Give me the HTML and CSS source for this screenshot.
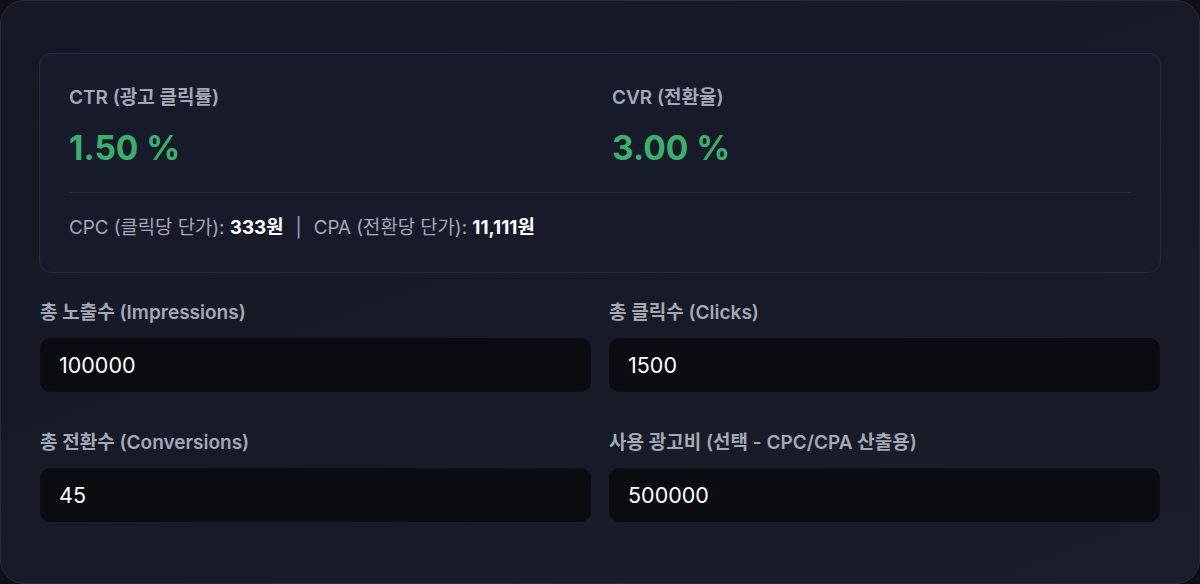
FILE: index.html
```html
<!DOCTYPE html>
<html lang="ko">

<head>
    <meta charset="UTF-8">
    <meta name="viewport" content="width=device-width, initial-scale=1.0">
    <title>광고 성과 계산기</title>
    <link rel="stylesheet" href="styles.css">
</head>

<body>

    <div class="card">
        <!-- 결과 요약 -->
        <div class="result-box">
            <div class="metrics">
                <div class="metric">
                    <div class="metric-label">CTR (광고 클릭률)</div>
                    <div class="metric-value" id="ctr">1.50 %</div>
                </div>
                <div class="metric">
                    <div class="metric-label">CVR (전환율)</div>
                    <div class="metric-value" id="cvr">3.00 %</div>
                </div>
            </div>
            <div class="divider"></div>
            <div class="cost-line">
                CPC (클릭당 단가): <b id="cpc">333원</b><span class="sep">|</span>CPA (전환당 단가): <b id="cpa">11,111원</b>
            </div>
        </div>

        <!-- 입력 폼 -->
        <div class="form-grid">
            <div class="field">
                <label for="impressions">총 노출수 (Impressions)</label>
                <input type="number" id="impressions" value="100000">
            </div>
            <div class="field">
                <label for="clicks">총 클릭수 (Clicks)</label>
                <input type="number" id="clicks" value="1500">
            </div>
            <div class="field">
                <label for="conversions">총 전환수 (Conversions)</label>
                <input type="number" id="conversions" value="45">
            </div>
            <div class="field">
                <label for="cost">사용 광고비 (선택 - CPC/CPA 산출용)</label>
                <input type="number" id="cost" value="500000">
            </div>
        </div>
    </div>

</body>

</html>
```

FILE: styles.css
```css
* {
    box-sizing: border-box;
}

body {
    margin: 0;
    background: #0e1017;
    font-family: 'Inter', 'Noto Sans CJK KR', sans-serif;
    color: #e5e7eb;
}

/* 카드 */
.card {
    height: 584px;
    padding: 52px 38px 0;
    background: linear-gradient(160deg, #151925 0%, #171b28 60%, #191e2a 100%);
    border: 1px solid #262b37;
    border-radius: 24px;
}

/* 결과 요약 */
.result-box {
    padding: 32px 29px 32px;
    background: #171b29;
    border: 1px solid #262b38;
    border-radius: 12px;
}

.metrics {
    display: grid;
    grid-template-columns: 1fr 1fr;
    gap: 24px;
}

.metric-label {
    font-size: 19px;
    font-weight: 600;
    line-height: 24px;
    color: #a3a8b4;
}

.metric-value {
    margin-top: 18px;
    font-size: 33.5px;
    font-weight: 700;
    line-height: 40px;
    color: #38b06c;
}

.divider {
    height: 1px;
    margin: 24px 0 23px;
    background: #262b38;
}

.cost-line {
    font-size: 18.8px;
    line-height: 24px;
    color: #a3a8b4;
}

.cost-line b {
    color: #ffffff;
    font-weight: 700;
}

.sep {
    margin: 0 12px;
}

/* 입력 폼 */
.form-grid {
    display: grid;
    grid-template-columns: 1fr 1fr;
    column-gap: 18px;
    row-gap: 39px;
    margin-top: 28px;
    padding: 0 1px;
}

.field label {
    display: block;
    margin-bottom: 13px;
    font-size: 19px;
    font-weight: 600;
    line-height: 24px;
    color: #a3a8b4;
}

.field input {
    display: block;
    width: 100%;
    height: 54px;
    padding: 0 18px;
    background: #0b0c10;
    border: 1px solid #0d0e13;
    border-radius: 10px;
    color: #ffffff;
    font-family: inherit;
    font-size: 21.5px;
    outline: none;
    -moz-appearance: textfield;
}

.field input::-webkit-inner-spin-button,
.field input::-webkit-outer-spin-button {
    -webkit-appearance: none;
    margin: 0;
}
```
